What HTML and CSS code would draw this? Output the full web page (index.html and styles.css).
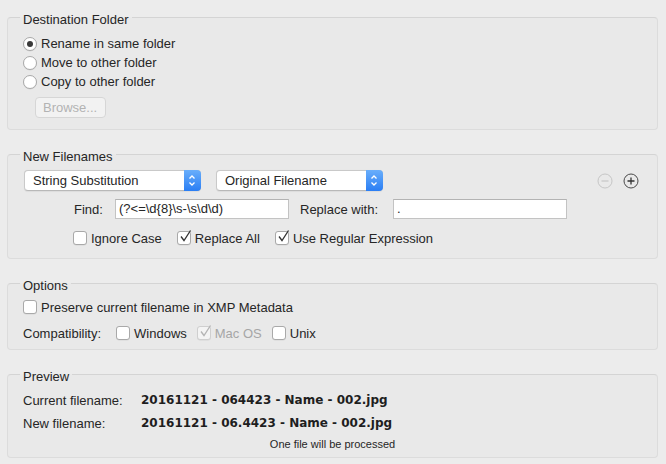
FILE: index.html
```html
<!DOCTYPE html>
<html lang="en">
<head>
	<meta charset="UTF-8">
	<title>Rename Files</title>
	<link rel="stylesheet" href="styles.css">
</head>
<body>
<fieldset class="group">
	<legend>Destination Folder</legend>
	<div class="option-row"><span class="radio on"></span>Rename in same folder</div>
	<div class="option-row"><span class="radio"></span>Move to other folder</div>
	<div class="option-row"><span class="radio"></span>Copy to other folder</div>
	<button class="browse" disabled>Browse...</button>
</fieldset>

<fieldset class="group">
	<legend>New Filenames</legend>
	<div class="popup-row">
		<div class="popup popup-1">
			<span class="popup-text">String Substitution</span>
			<span class="popup-arrows"><svg width="16" height="21" viewBox="0 0 16 21"><path d="M5.5 8.5 L8 6 L10.5 8.5 M5.5 12.5 L8 15 L10.5 12.5" fill="none" stroke="#fff" stroke-width="1.3"/></svg></span>
		</div>
		<div class="popup popup-2">
			<span class="popup-text">Original Filename</span>
			<span class="popup-arrows"><svg width="16" height="21" viewBox="0 0 16 21"><path d="M5.5 8.5 L8 6 L10.5 8.5 M5.5 12.5 L8 15 L10.5 12.5" fill="none" stroke="#fff" stroke-width="1.3"/></svg></span>
		</div>
		<div class="row-tools">
			<svg class="tool" width="16" height="16" viewBox="0 0 16 16"><circle cx="8" cy="8" r="7" fill="none" stroke="#c6c6c6"/><path d="M4.5 8 H11.5" stroke="#c6c6c6" stroke-width="1.2"/></svg>
			<svg class="tool" width="16" height="16" viewBox="0 0 16 16"><circle cx="8" cy="8" r="7" fill="none" stroke="#4a4a4a"/><path d="M4.5 8 H11.5 M8 4.5 V11.5" stroke="#333" stroke-width="1.3"/></svg>
		</div>
	</div>
	<div class="find-row">
		<span class="find-label">Find:</span>
		<span class="field">(?&lt;=\d{8}\s-\s\d\d)</span>
		<span class="replace-label">Replace with:</span>
		<span class="field">.</span>
	</div>
	<div class="checks-row">
		<div class="check-item"><span class="check"></span>Ignore Case</div>
		<div class="check-item"><span class="check on"><svg viewBox="0 0 14 14"><path d="M3 6.5 L6 10.5 L12.5 0.5" fill="none" stroke="#333" stroke-width="1.3"/></svg></span>Replace All</div>
		<div class="check-item"><span class="check on"><svg viewBox="0 0 14 14"><path d="M3 6.5 L6 10.5 L12.5 0.5" fill="none" stroke="#333" stroke-width="1.3"/></svg></span>Use Regular Expression</div>
	</div>
</fieldset>

<fieldset class="group options">
	<legend>Options</legend>
	<div class="check-item"><span class="check"></span>Preserve current filename in XMP Metadata</div>
	<div class="compat-row">
		<span class="compat-label">Compatibility:</span>
		<div class="check-item"><span class="check"></span>Windows</div>
		<div class="check-item disabled"><span class="check on"><svg viewBox="0 0 14 14"><path d="M3 6.5 L6 10.5 L12.5 0.5" fill="none" stroke="#b4b4b4" stroke-width="1.3"/></svg></span>Mac OS</div>
		<div class="check-item"><span class="check"></span>Unix</div>
	</div>
</fieldset>

<fieldset class="group preview">
	<legend>Preview</legend>
	<div class="preview-grid">
		<span>Current filename:</span>
		<span class="name">20161121 - 064423 - Name - 002.jpg</span>
		<span>New filename:</span>
		<span class="name">20161121 - 06.4423 - Name - 002.jpg</span>
	</div>
	<div class="note">One file will be processed</div>
</fieldset>
</body>
</html>
```

FILE: styles.css
```css
* {
	margin: 0;
	padding: 0;
	box-sizing: border-box;
}

body {
	width: 666px;
	height: 464px;
	background: #ececec;
	font-family: "Liberation Sans", Arial, sans-serif;
	font-size: 13px;
	color: #262626;
	overflow: hidden;
}

.group {
	margin: 13px 8px 0 7px;
	padding: 6px 15px 11px 15px;
	border: 1px solid #dcdcdc;
	border-top-color: #d4d4d4;
	border-radius: 4px;
	background: #e9e9e9;
	min-width: 0;
}

.group:first-child {
	margin-top: 6px;
}

.group > legend {
	padding: 6px 3px 0 3px;
	margin-left: -3px;
	line-height: 16px;
}

/* radio rows */
.option-row {
	display: flex;
	align-items: center;
	height: 19px;
}

.radio {
	width: 14px;
	height: 14px;
	margin-right: 4px;
	border: 1px solid #a9a9a9;
	border-radius: 50%;
	background: #fff;
	display: flex;
	align-items: center;
	justify-content: center;
	box-shadow: 0 0.5px 0.5px rgba(0, 0, 0, 0.08);
}

.radio.on::after {
	content: "";
	width: 6px;
	height: 6px;
	border-radius: 50%;
	background: #3a3a3a;
}

.browse {
	display: block;
	margin: 6px 0 0 12px;
	width: 71px;
	height: 21px;
	border: 1px solid #d6d6d6;
	border-radius: 4px;
	background: #f2f2f2;
	color: #b3b3b3;
	font-family: inherit;
	font-size: 13px;
	text-align: left;
	padding-left: 7px;
}

/* popup row */
.popup-row {
	display: flex;
	align-items: center;
	height: 21px;
	margin-top: -1px;
}

.popup {
	display: flex;
	height: 21px;
	border: 1px solid #c9c9c9;
	border-bottom-color: #b8b8b8;
	border-radius: 4px;
	background: #fff;
	box-shadow: 0 0.5px 1px rgba(0, 0, 0, 0.06);
}

.popup-1 {
	width: 177px;
	margin-left: 1px;
}

.popup-2 {
	width: 167px;
	margin-left: 15px;
}

.popup-text {
	flex: 1;
	padding-left: 8px;
	line-height: 19px;
	white-space: nowrap;
}

.popup-arrows {
	width: 17px;
	margin: -1px -1px -1px 0;
	border-radius: 0 4px 4px 0;
	background: linear-gradient(#69aefb, #2a7ef4);
	display: flex;
}

.row-tools {
	margin-left: auto;
	margin-right: 3px;
	display: flex;
	gap: 10px;
}

/* find row */
.find-row {
	display: flex;
	align-items: center;
	margin-top: 8px;
	height: 20px;
}

.find-label {
	margin-left: 51px;
	width: 41px;
}

.replace-label {
	margin-left: 11px;
	width: 93px;
}

.field {
	width: 174px;
	height: 20px;
	border: 1px solid #c3c3c3;
	border-top-color: #b3b3b3;
	background: #fff;
	padding-left: 3px;
	line-height: 18px;
	white-space: nowrap;
	overflow: hidden;
}

/* checkboxes */
.checks-row {
	display: flex;
	align-items: center;
	height: 18px;
	margin-top: 10px;
	padding-left: 50px;
	gap: 15px;
}

.check-item {
	display: flex;
	align-items: center;
	height: 18px;
	white-space: nowrap;
}

.check {
	position: relative;
	width: 14px;
	height: 14px;
	margin-right: 4px;
	border: 1px solid #a9a9a9;
	border-radius: 3px;
	background: #fff;
	box-shadow: 0 0.5px 0.5px rgba(0, 0, 0, 0.08);
}

.check svg {
	position: absolute;
	left: 0;
	top: -2px;
	width: 14px;
	height: 14px;
	overflow: visible;
}

.disabled {
	color: #a6a6a6;
}

.disabled .check {
	border-color: #cfcfcf;
	background: #f4f4f4;
}

/* options */
.options {
	padding-top: 4px;
	padding-bottom: 7px;
}

.compat-row {
	display: flex;
	align-items: center;
	height: 18px;
	margin-top: 8px;
}

.compat-label {
	margin-right: 15px;
}

.compat-row .check-item {
	margin-right: 10px;
}

/* preview */
.preview {
	padding-bottom: 6px;
}

.preview-grid {
	display: grid;
	grid-template-columns: 118px auto;
	grid-auto-rows: 18px;
	row-gap: 5px;
	align-items: center;
}

.name {
	font-family: "DejaVu Sans", sans-serif;
	font-weight: bold;
	font-size: 12px;
	color: #1e1e1e;
}

.note {
	margin-top: 5px;
	text-align: center;
	font-size: 11px;
	line-height: 14px;
}
```
